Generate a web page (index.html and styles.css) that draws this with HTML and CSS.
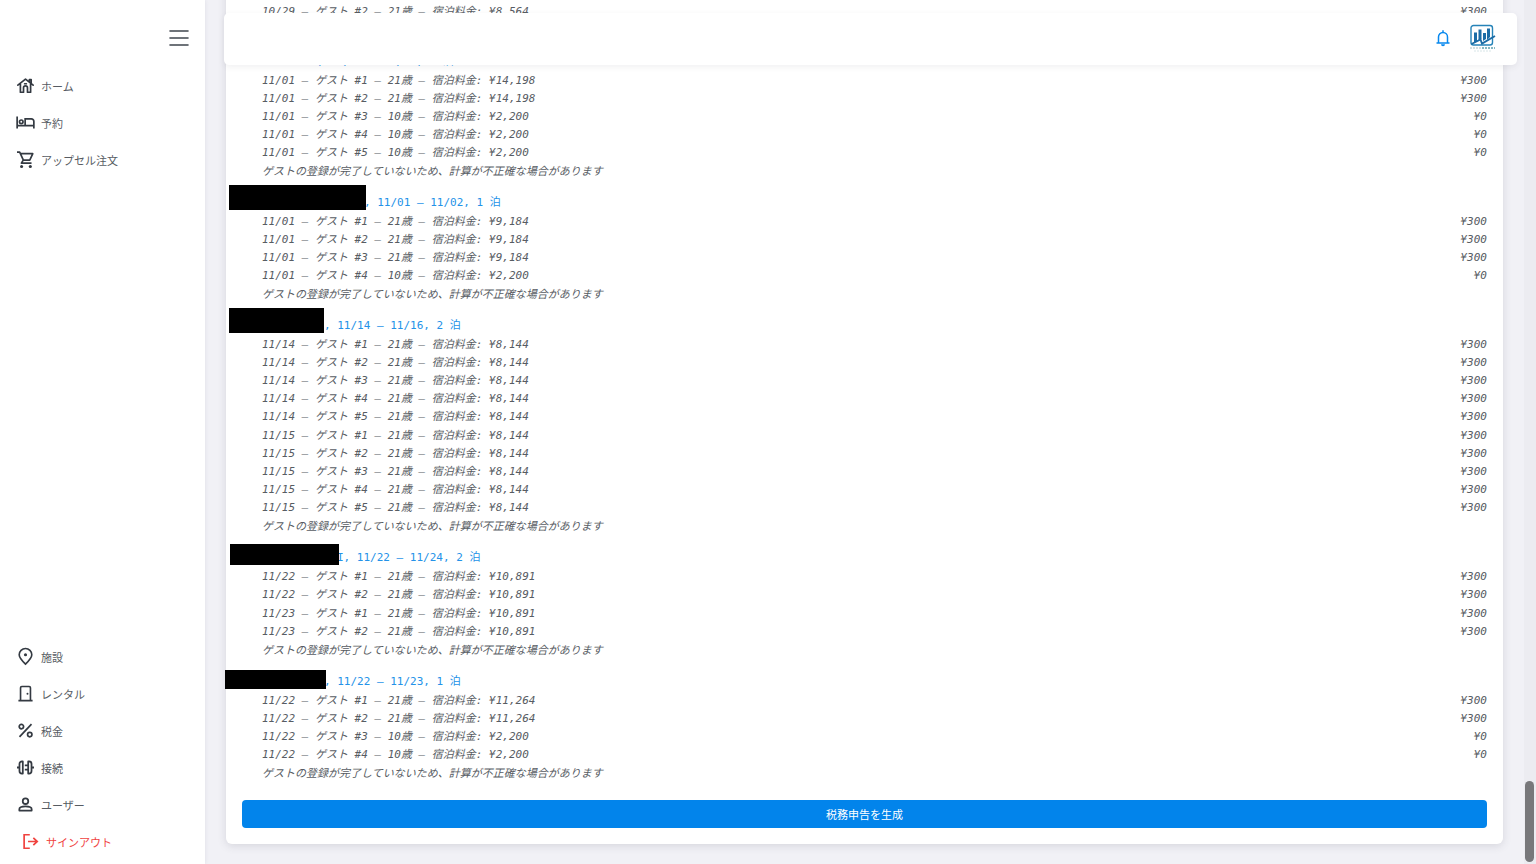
FILE: index.html
```html
<!DOCTYPE html>
<html lang="ja">
  <head>
    <title>税金</title>
    <meta charset="utf-8" />
    <meta name="viewport" content="width=device-width, initial-scale=1" />
    <link rel="stylesheet" href="styles.css">
  </head>
  <body>
    <div class="app">
      <aside class="sidebar">
        <div class="sidebar-header">
          <button type="button" class="menu-toggle" aria-label="メニュー">
            <svg width="20" height="16" viewBox="0 0 20 16" fill="none" stroke="currentColor" stroke-width="1.6" stroke-linecap="round"><path d="M1 1h18M1 8h18M1 15h18" /></svg>
          </button>
        </div>
        <nav class="nav">
          <a href="#" class="nav-link">
            <svg class="icon" viewBox="0 0 24 24" fill="none" stroke="currentColor" stroke-width="2.4" stroke-linejoin="round" stroke-linecap="round"><path d="M1.2 11.5 12 3l10.8 8.5M17.5 7V3.5H20V9M4.8 10v11.5h4.4v-6.2a2.8 2.8 0 0 1 5.6 0v6.2h4.4V10M10.8 9.5h2.4" /></svg>
            ホーム
          </a>
          <a href="#" class="nav-link">
            <svg class="icon" viewBox="0 0 24 24" fill="none" stroke="currentColor" stroke-width="2.4"><path d="M.2 3.5v17M.2 16.5h23.6M23.8 20.5v-10A3.5 3.5 0 0 0 20.3 7h-8.8v9.5" /><circle cx="6" cy="11" r="2.5" /></svg>
            予約
          </a>
          <a href="#" class="nav-link">
            <svg class="icon" viewBox="0 0 24 24" fill="none" stroke="currentColor" stroke-width="2.4"><path d="M0 1.5h3.8L9 12.8h9l4.3-9H5M8.8 12.8l-2.6 4.3h14.3" stroke-linejoin="round" /><circle cx="6.5" cy="21.8" r="2.2" fill="currentColor" stroke="none" /><circle cx="18.8" cy="21.8" r="2.2" fill="currentColor" stroke="none" /></svg>
            アップセル注文
          </a>
        </nav>
        <nav class="nav nav-bottom">
          <a href="#" class="nav-link">
            <svg class="icon" viewBox="0 0 24 24" fill="none" stroke="currentColor" stroke-width="2.3"><path d="M12 22.8C7 18 3.1 14 3.1 9.6a8.9 8.9 0 0 1 17.8 0c0 4.4-3.9 8.4-8.9 13.2Z" /><circle cx="12" cy="9.6" r="2.2" fill="currentColor" stroke="none" /></svg>
            施設
          </a>
          <a href="#" class="nav-link">
            <svg class="icon" viewBox="0 0 24 24" fill="none" stroke="currentColor" stroke-width="2.3"><path d="M2 22h20M5 22V4a1.8 1.8 0 0 1 1.8-1.8h10.4A1.8 1.8 0 0 1 19 4v18" /><circle cx="14.8" cy="12.2" r="1.4" fill="currentColor" stroke="none" /></svg>
            レンタル
          </a>
          <a href="#" class="nav-link">
            <svg class="icon" viewBox="0 0 24 24" fill="none" stroke="currentColor" stroke-width="2.4"><path d="M20.5 3 3.5 21" /><circle cx="6.2" cy="6.5" r="3.1" /><circle cx="18" cy="17.8" r="3.1" /></svg>
            税金
          </a>
          <a href="#" class="nav-link">
            <svg class="icon" viewBox="0 0 24 24" fill="none" stroke="currentColor" stroke-width="2.5" stroke-linejoin="round"><path d="M8.2 3.5v17H7A3.5 3.5 0 0 1 3.5 17V7A3.5 3.5 0 0 1 7 3.5ZM15.8 3.5v17H17a3.5 3.5 0 0 0 3.5-3.5V7A3.5 3.5 0 0 0 17 3.5ZM0 12h3.5M20.5 12H24M11 9h4.8M11 15h4.8" /></svg>
            接続
          </a>
          <a href="#" class="nav-link">
            <svg class="icon" viewBox="0 0 24 24" fill="none" stroke="currentColor" stroke-width="2.5" stroke-linejoin="round"><circle cx="12" cy="7.4" r="3.9" /><path d="M3.3 20.6v-2c0-2.9 3.6-3.9 8.7-3.9s8.7 1 8.7 3.9v2Z" /></svg>
            ユーザー
          </a>
          <a href="#" class="nav-link nav-signout">
            <svg class="icon" viewBox="0 0 24 24" fill="none" stroke="currentColor" stroke-width="2.4"><path d="M11 2.5H3v19h8M8.5 12h13M16 7l5.5 5-5.5 5" /></svg>
            サインアウト
          </a>
        </nav>
      </aside>

      <div class="content">
        <header class="topbar">
          <button type="button" class="bell" aria-label="通知">
            <svg width="16" height="18" viewBox="0 0 16 18" fill="none" stroke="currentColor" stroke-width="1.5"><path d="M1.5 14h13M3.5 14V8a4.500 4.500 0 0 1 9 0v6M8 1.2v2.300" /><path d="M6 15.300h4a2 2 0 0 1-4 0Z" fill="currentColor" stroke="none" /></svg>
          </button>
          <a href="#" class="brand" aria-label="アカウント">
            <svg width="28" height="28" viewBox="0 0 28 28" fill="none">
              <rect x="2" y="1.5" width="21.5" height="19.5" rx="2.5" stroke="#2683b8" stroke-width="1.4" />
              <path d="M5 8.500h3V17l-3 2ZM9.500 5.500h3V15l-3 2ZM14 9h3v6l-3 2ZM18 4.500h3V13l-3 3Z" fill="#1c6ca6" />
              <path d="m2.500 20 9-4.500 1.500 4L26 12" stroke="#1c6ca6" stroke-width="1.9" />
              <path d="M1 24h11" stroke="#c5d6d9" stroke-width="1.5" stroke-dasharray="2 1" />
              <path d="M13 24h13" stroke="#86b8c2" stroke-width="2" stroke-dasharray="2 1" />
              <path d="M5 27h18" stroke="#d7e5e7" stroke-dasharray="2 1" />
            </svg>
          </a>
        </header>

        <main class="card">
          <section class="booking">
            <ul class="night">
              <li><span>10/29 – ゲスト #2 – 21歳 – 宿泊料金: ¥8,564</span><span>¥300</span></li>
            </ul>
            <p class="note">ゲストの登録が完了していないため、計算が不正確な場合があります</p>
          </section>

          <section class="booking">
            <a href="#" class="booking-link"><span class="guest guest-tiny"></span>, 11/01 – 11/02, 1 泊</a>
            <ul class="night">
              <li><span>11/01 – ゲスト #1 – 21歳 – 宿泊料金: ¥14,198</span><span>¥300</span></li>
              <li><span>11/01 – ゲスト #2 – 21歳 – 宿泊料金: ¥14,198</span><span>¥300</span></li>
              <li><span>11/01 – ゲスト #3 – 10歳 – 宿泊料金: ¥2,200</span><span>¥0</span></li>
              <li><span>11/01 – ゲスト #4 – 10歳 – 宿泊料金: ¥2,200</span><span>¥0</span></li>
              <li><span>11/01 – ゲスト #5 – 10歳 – 宿泊料金: ¥2,200</span><span>¥0</span></li>
            </ul>
            <p class="note">ゲストの登録が完了していないため、計算が不正確な場合があります</p>
          </section>

          <section class="booking">
            <a href="#" class="booking-link"><span class="guest guest-long"><span class="mask mask-long"></span></span>, 11/01 – 11/02, 1 泊</a>
            <ul class="night">
              <li><span>11/01 – ゲスト #1 – 21歳 – 宿泊料金: ¥9,184</span><span>¥300</span></li>
              <li><span>11/01 – ゲスト #2 – 21歳 – 宿泊料金: ¥9,184</span><span>¥300</span></li>
              <li><span>11/01 – ゲスト #3 – 21歳 – 宿泊料金: ¥9,184</span><span>¥300</span></li>
              <li><span>11/01 – ゲスト #4 – 10歳 – 宿泊料金: ¥2,200</span><span>¥0</span></li>
            </ul>
            <p class="note">ゲストの登録が完了していないため、計算が不正確な場合があります</p>
          </section>

          <section class="booking">
            <a href="#" class="booking-link"><span class="guest guest-short"><span class="mask mask-short"></span></span>, 11/14 – 11/16, 2 泊</a>
            <ul class="night">
              <li><span>11/14 – ゲスト #1 – 21歳 – 宿泊料金: ¥8,144</span><span>¥300</span></li>
              <li><span>11/14 – ゲスト #2 – 21歳 – 宿泊料金: ¥8,144</span><span>¥300</span></li>
              <li><span>11/14 – ゲスト #3 – 21歳 – 宿泊料金: ¥8,144</span><span>¥300</span></li>
              <li><span>11/14 – ゲスト #4 – 21歳 – 宿泊料金: ¥8,144</span><span>¥300</span></li>
              <li><span>11/14 – ゲスト #5 – 21歳 – 宿泊料金: ¥8,144</span><span>¥300</span></li>
            </ul>
            <ul class="night">
              <li><span>11/15 – ゲスト #1 – 21歳 – 宿泊料金: ¥8,144</span><span>¥300</span></li>
              <li><span>11/15 – ゲスト #2 – 21歳 – 宿泊料金: ¥8,144</span><span>¥300</span></li>
              <li><span>11/15 – ゲスト #3 – 21歳 – 宿泊料金: ¥8,144</span><span>¥300</span></li>
              <li><span>11/15 – ゲスト #4 – 21歳 – 宿泊料金: ¥8,144</span><span>¥300</span></li>
              <li><span>11/15 – ゲスト #5 – 21歳 – 宿泊料金: ¥8,144</span><span>¥300</span></li>
            </ul>
            <p class="note">ゲストの登録が完了していないため、計算が不正確な場合があります</p>
          </section>

          <section class="booking">
            <a href="#" class="booking-link"><span class="guest guest-medium"><span class="mask mask-medium"></span></span>I, 11/22 – 11/24, 2 泊</a>
            <ul class="night">
              <li><span>11/22 – ゲスト #1 – 21歳 – 宿泊料金: ¥10,891</span><span>¥300</span></li>
              <li><span>11/22 – ゲスト #2 – 21歳 – 宿泊料金: ¥10,891</span><span>¥300</span></li>
            </ul>
            <ul class="night">
              <li><span>11/23 – ゲスト #1 – 21歳 – 宿泊料金: ¥10,891</span><span>¥300</span></li>
              <li><span>11/23 – ゲスト #2 – 21歳 – 宿泊料金: ¥10,891</span><span>¥300</span></li>
            </ul>
            <p class="note">ゲストの登録が完了していないため、計算が不正確な場合があります</p>
          </section>

          <section class="booking">
            <a href="#" class="booking-link"><span class="guest guest-short"><span class="mask mask-low"></span></span>, 11/22 – 11/23, 1 泊</a>
            <ul class="night">
              <li><span>11/22 – ゲスト #1 – 21歳 – 宿泊料金: ¥11,264</span><span>¥300</span></li>
              <li><span>11/22 – ゲスト #2 – 21歳 – 宿泊料金: ¥11,264</span><span>¥300</span></li>
              <li><span>11/22 – ゲスト #3 – 10歳 – 宿泊料金: ¥2,200</span><span>¥0</span></li>
              <li><span>11/22 – ゲスト #4 – 10歳 – 宿泊料金: ¥2,200</span><span>¥0</span></li>
            </ul>
            <p class="note">ゲストの登録が完了していないため、計算が不正確な場合があります</p>
          </section>

          <button type="button" class="submit">税務申告を生成</button>
        </main>
        <div class="scroll-track"><div class="scroll-thumb"></div></div>
      </div>
    </div>
  </body>
</html>
```
FILE: styles.css
```css
* {
  box-sizing: border-box;
}

body {
  margin: 0;
  font-family: 'Noto Sans CJK JP', sans-serif;
  font-size: 11px;
  line-height: 18px;
  color: #575c63;
  background-color: #f1f1f6;
}

a {
  color: inherit;
  text-decoration: none;
}

button {
  padding: 0;
  border: 0;
  background: none;
  font: inherit;
  cursor: pointer;
}

svg {
  display: block;
}

.app {
  display: flex;
  height: 100vh;
  overflow: hidden;
}

/* Sidebar */
.sidebar {
  display: flex;
  flex-direction: column;
  flex: none;
  width: 205px;
  padding-bottom: 4px;
  background-color: #fff;
  box-shadow: 0 0 4px rgba(60, 60, 90, 0.1);
}

.sidebar-header {
  display: flex;
  justify-content: flex-end;
  padding: 30px 16px 21px;
  color: #3f454d;
}

.menu-toggle {
  color: inherit;
}

.nav-bottom {
  margin-top: auto;
}

.nav-link {
  display: flex;
  align-items: center;
  gap: 7px;
  height: 37px;
  padding-left: 17px;
}

.icon {
  width: 17px;
  height: 17px;
  flex: none;
  overflow: visible;
  color: #343a42;
}

.nav-signout {
  padding-left: 22px;
  color: #f0433f;
}

.nav-signout .icon {
  color: inherit;
}

/* Content */
.content {
  position: relative;
  display: flex;
  flex: 1;
  flex-direction: column;
  justify-content: flex-end;
  min-width: 0;
  padding: 0 33px 20px 21px;
}

.topbar {
  position: absolute;
  top: 13px;
  left: 19px;
  right: 19px;
  z-index: 1;
  display: flex;
  align-items: center;
  justify-content: flex-end;
  gap: 18px;
  height: 52px;
  padding: 0 20px 2px 0;
  border-radius: 5px;
  background-color: #fff;
  box-shadow: 0 2px 6px rgba(60, 60, 80, 0.08);
}

.bell {
  color: #0788ee;
}

.card {
  flex: none;
  padding: 16px;
  border-radius: 6px;
  background-color: #fff;
  box-shadow: 0 2px 8px rgba(60, 60, 80, 0.15);
  font-family: 'DejaVu Sans Mono', 'Noto Sans CJK JP', monospace;
}

.booking {
  margin-bottom: 13px;
}

.booking-link {
  display: block;
  height: 18px;
  color: #2492e8;
}

.guest {
  position: relative;
  display: inline-block;
  height: 10px;
}

.guest-tiny {
  width: 75px;
}

.guest-short {
  width: 82px;
}

.guest-medium {
  width: 95px;
}

.guest-long {
  width: 122px;
}

/* Covers the guest name */
.mask {
  position: absolute;
  right: -2px;
  bottom: -4px;
  z-index: 1;
  height: 25px;
  background-color: #000;
}

.mask-short {
  right: 0;
  width: 95px;
}

.mask-medium {
  width: 109px;
  height: 21px;
}

.mask-long {
  width: 137px;
}

.mask-low {
  width: 101px;
  height: 19px;
}

.night {
  margin: 0;
  padding: 1px 0 1px 20px;
  list-style: none;
  font-style: italic;
}

.night + .night {
  padding-top: 0;
}

.night li {
  display: flex;
  justify-content: space-between;
  height: 18px;
}

.note {
  height: 18px;
  margin: 0;
  padding-left: 20px;
  font-style: italic;
}

.submit {
  display: block;
  width: 100%;
  height: 28px;
  margin-top: 17px;
  border-radius: 4px;
  background-color: #0284eb;
  color: #fff;
  font-family: 'Noto Sans CJK JP', sans-serif;
}

.scroll-track {
  position: absolute;
  top: 0;
  right: 0;
  bottom: 0;
  width: 12px;
  background-color: #ececf1;
}

.scroll-thumb {
  position: absolute;
  right: 2px;
  bottom: 2px;
  width: 9px;
  height: 81px;
  border-radius: 5px;
  background-color: #78787b;
}
```
